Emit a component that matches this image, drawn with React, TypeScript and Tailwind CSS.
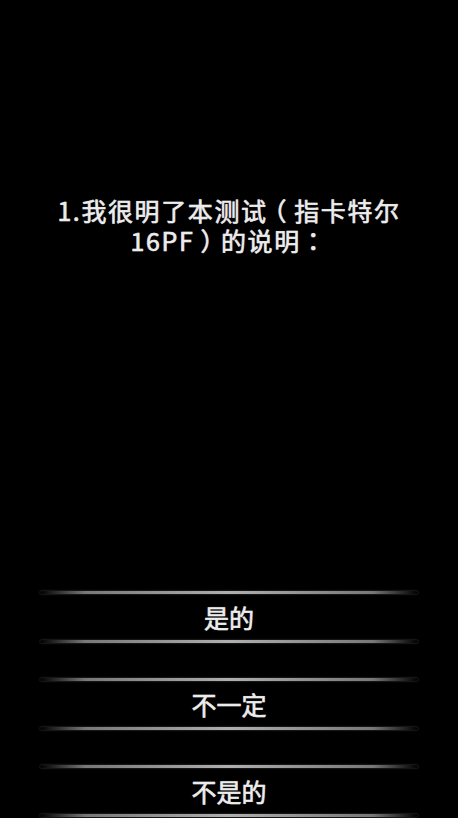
import React from "react";

function Line() {
  return (
    <div className="h-[3px] mx-[40px] rounded-full bg-[linear-gradient(to_right,rgba(150,150,150,0)_0%,rgba(150,150,150,0.8)_12%,rgba(175,175,175,1)_50%,rgba(150,150,150,0.8)_88%,rgba(150,150,150,0)_100%)] shadow-[0_0_2px_rgba(200,200,200,0.4)]" />
  );
}

function Option({ label }: { label: string }) {
  return (
    <div className="flex flex-col">
      <Line />
      <div className="h-[46px] flex items-center justify-center text-[25px] leading-none text-[#ececec] [-webkit-text-stroke:0.5px_#ececec] [text-shadow:0_0_1px_rgba(255,255,255,0.5)]">
        {label}
      </div>
      <Line />
    </div>
  );
}

export default function App() {
  return (
    <div
      className="w-[458px] h-[818px] bg-black flex flex-col overflow-hidden"
      style={{ fontFamily: '"Noto Sans CJK TC", "Noto Sans CJK SC", "Noto Sans", sans-serif' }}
    >
      <div className="pt-[195px] px-[20px] text-center text-[25px] leading-[30px] tracking-[1.6px] text-[#ececec] [-webkit-text-stroke:0.5px_#ececec] [text-shadow:0_0_1px_rgba(255,255,255,0.5)]">
        <div>
          1.我很明了本测试<span className="inline-block -translate-x-[6px]">（</span>指卡特尔
        </div>
        <div>
          16PF<span className="inline-block translate-x-[6px]">）</span>的说明：
        </div>
      </div>
      <div className="flex-1" />
      <div className="flex flex-col gap-[35px] pb-[1px]">
        <Option label="是的" />
        <Option label="不一定" />
        <Option label="不是的" />
      </div>
    </div>
  );
}
